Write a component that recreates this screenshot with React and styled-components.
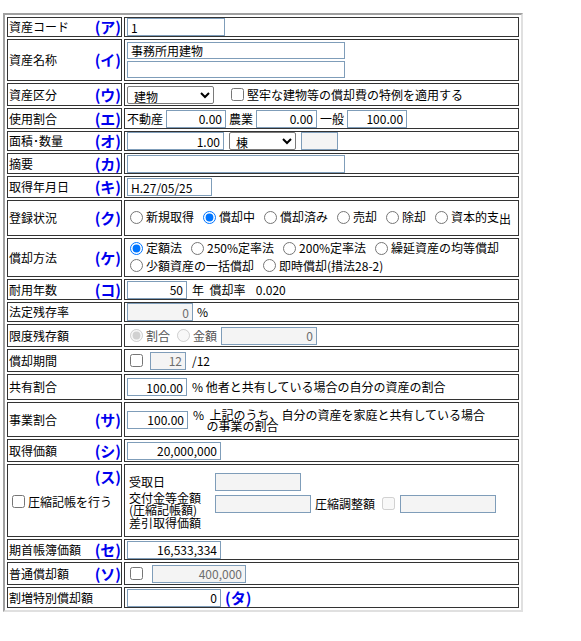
import React from "react";
import styled, { createGlobalStyle } from "styled-components";

const Global = createGlobalStyle`
  body { margin: 0; background: #fff; font-family: "Noto Sans CJK JP", "Noto Sans", sans-serif; font-size: 12px; color: #000; }
`;
const Page = styled.div` padding: 13px 0 0 3px; `;
const Frame = styled.div`
  width: 520px; border: 2px solid #a0a0a0; border-right-color: #e0e0e0; border-bottom-color: #e0e0e0; box-sizing: border-box;
`;
const Table = styled.table`
  width: 100%; border-collapse: separate; border-spacing: 2px; table-layout: fixed;
`;
const Label = styled.td`
  width: 111px; border: 1px solid #333; padding: 0 0 0 1px; vertical-align: middle; white-space: nowrap; line-height: 14px;
  height: ${p => p.h}px; overflow: hidden;
`;
const LabelInner = styled.div`
  display: flex; justify-content: space-between; align-items: center;
  ${p => p.column && "flex-direction: column; align-items: stretch; gap: 10px;"}
`;
const Kana = styled.span`
  color: #0000ee; font-weight: bold; font-size: 15px; line-height: 16px; align-self: ${p => p.top ? "flex-end" : "auto"};
`;
const Value = styled.td`
  border: 1px solid #333; padding: 0 2px; vertical-align: middle; line-height: 14px;
`;
const Row = styled.div`
  display: flex; align-items: center; gap: ${p => p.gap ?? 4}px;
`;
const Col = styled.div` display: flex; flex-direction: column; gap: ${p => p.gap ?? 2}px; `;
const Input = styled.input`
  box-sizing: border-box; width: ${p => p.w}px; height: ${p => p.h || 18}px;
  border: 1px solid #7f9db9; padding: 0 3px; font: inherit; font-size: 12px;
  text-align: ${p => p.right ? "right" : "left"};
  background: ${p => p.dis ? "#f4f4f4" : "#fff"}; color: ${p => p.dis ? "#6d6d6d" : "#000"};
`;
const Select = styled.select`
  box-sizing: border-box; width: ${p => p.w}px; height: 18px; font: inherit; font-size: 12px;
  border: 1px solid #7a7a7a; border-radius: 2px; background: #fff; padding: 0 2px;
`;
const Opt = styled.label`
  display: inline-flex; align-items: center; gap: 2px; white-space: nowrap;
  color: ${p => p.dis ? "#555" : "#000"};
  input { margin: 0 1px 0 3px; width: 13px; height: 13px; }
`;
const Radios = styled.div` line-height: 16px; padding: 1px 0; span.o { margin-right: 6px; } `;
const Note = styled.span` line-height: 11px; `;
const Small = styled.span` font-size: 12px; `;
const Grid = styled.div`
  display: grid; grid-template-columns: 84px auto auto auto auto; justify-content: start; align-items: center; column-gap: 4px; row-gap: 1px; padding: 2px 0;
  span.l { line-height: 12px; margin-left: 2px; }
`;

const L = ({ t, k, h }) => (
  <Label h={h}><LabelInner><span>{t}</span>{k && <Kana>({k})</Kana>}</LabelInner></Label>
);

export default function App() {
  return (
    <Page>
      <Global />
      <Frame>
        <Table>
          <colgroup><col style={{ width: 115 }} /><col /></colgroup>
          <tbody>
            <tr><L t="資産コード" k="ア" h={18} /><Value><Input w={98} defaultValue="1" /></Value></tr>
            <tr><L t="資産名称" k="イ" h={40} /><Value><Col><Input w={218} h={17} defaultValue="事務所用建物" /><Input w={218} h={17} /></Col></Value></tr>
            <tr><L t="資産区分" k="ウ" h={21} /><Value><Row gap={14}>
              <Select w={87}><option>建物</option></Select>
              <Opt><input type="checkbox" />堅牢な建物等の償却費の特例を適用する</Opt></Row></Value></tr>
            <tr><L t="使用割合" k="エ" h={19} /><Value><Row gap={3}>
              <span>不動産</span><Input w={60} right defaultValue="0.00" />
              <span>農業</span><Input w={61} right defaultValue="0.00" />
              <span>一般</span><Input w={60} right defaultValue="100.00" /></Row></Value></tr>
            <tr><L t="面積･数量" k="オ" h={18} /><Value><Row gap={5}>
              <Input w={97} right defaultValue="1.00" />
              <Select w={67}><option>棟</option></Select>
              <Input w={37} dis disabled /></Row></Value></tr>
            <tr><L t="摘要" k="カ" h={19} /><Value><Input w={218} /></Value></tr>
            <tr><L t="取得年月日" k="キ" h={20} /><Value><Input w={85} defaultValue="H.27/05/25" /></Value></tr>
            <tr><L t="登録状況" k="ク" h={34} /><Value><Radios>
              <span className="o"><Opt><input type="radio" name="a" />新規取得</Opt></span>
              <span className="o"><Opt><input type="radio" name="a" defaultChecked />償却中</Opt></span>
              <span className="o"><Opt><input type="radio" name="a" />償却済み</Opt></span>
              <span className="o"><Opt><input type="radio" name="a" />売却</Opt></span>
              <span className="o"><Opt><input type="radio" name="a" />除却</Opt></span>
              <Opt><input type="radio" name="a" />資本的支</Opt>出
            </Radios></Value></tr>
            <tr><L t="償却方法" k="ケ" h={37} /><Value><Radios>
              <span className="o"><Opt><input type="radio" name="b" defaultChecked />定額法</Opt></span>
              <span className="o"><Opt><input type="radio" name="b" />250%定率法</Opt></span>
              <span className="o"><Opt><input type="radio" name="b" />200%定率法</Opt></span>
              <Opt><input type="radio" name="b" />繰延資産の均等償却</Opt><br />
              <span className="o"><Opt><input type="radio" name="b" />少額資産の一括償却</Opt></span>
              <Opt><input type="radio" name="b" />即時償却(措法28-2)</Opt>
            </Radios></Value></tr>
            <tr><L t="耐用年数" k="コ" h={19} /><Value><Row gap={5}>
              <Input w={60} right defaultValue="50" /><span>年&nbsp;&nbsp;償却率</span><Small>&nbsp;&nbsp;0.020</Small></Row></Value></tr>
            <tr><L t="法定残存率" h={18} /><Value><Row gap={4}><Input w={66} right dis defaultValue="0" /><span>%</span></Row></Value></tr>
            <tr><L t="限度残存額" h={21} /><Value><Row gap={4}>
              <Opt dis><input type="radio" disabled defaultChecked />割合</Opt>
              <Opt dis><input type="radio" disabled />金額</Opt>
              <Input w={96} right dis defaultValue="0" /></Row></Value></tr>
            <tr><L t="償却期間" h={21} /><Value><Row gap={6}>
              <Opt><input type="checkbox" /></Opt><Input w={36} right dis defaultValue="12" /><span>/12</span></Row></Value></tr>
            <tr><L t="共有割合" h={24} /><Value><Row gap={5}>
              <Input w={60} right defaultValue="100.00" /><span>% 他者と共有している場合の自分の資産の割合</span></Row></Value></tr>
            <tr><L t="事業割合" k="サ" h={33} /><Value><Row gap={5}>
              <Input w={61} right defaultValue="100.00" /><Note>% &nbsp;上記のうち、自分の資産を家庭と共有している場合<br />&nbsp;&nbsp;&nbsp;&nbsp;&nbsp;の事業の割合</Note></Row></Value></tr>
            <tr><L t="取得価額" k="シ" h={21} /><Value><Input w={94} right defaultValue="20,000,000" /></Value></tr>
            <tr>
              <Label h={71}><LabelInner column><Kana top>(ス)</Kana><Opt><input type="checkbox" />圧縮記帳を行う</Opt><span>&nbsp;</span></LabelInner></Label>
              <Value><Grid>
                <span className="l">受取日</span><Input w={86} dis disabled /><span /><span /><span />
                <span className="l">交付金等金額<br />(圧縮記帳額)</span><Input w={96} dis disabled />
                <span>圧縮調整額</span><Opt><input type="checkbox" disabled /></Opt><Input w={96} dis disabled />
                <span className="l">差引取得価額</span><span /><span /><span /><span />
              </Grid></Value>
            </tr>
            <tr><L t="期首帳簿価額" k="セ" h={19} /><Value><Input w={94} right defaultValue="16,533,334" /></Value></tr>
            <tr><L t="普通償却額" k="ソ" h={21} /><Value><Row gap={8}>
              <Opt><input type="checkbox" /></Opt><Input w={94} right dis defaultValue="400,000" /></Row></Value></tr>
            <tr><L t="割増特別償却額" h={19} /><Value><Row gap={4}>
              <Input w={94} right defaultValue="0" /><Kana>(タ)</Kana></Row></Value></tr>
          </tbody>
        </Table>
      </Frame>
    </Page>
  );
}
